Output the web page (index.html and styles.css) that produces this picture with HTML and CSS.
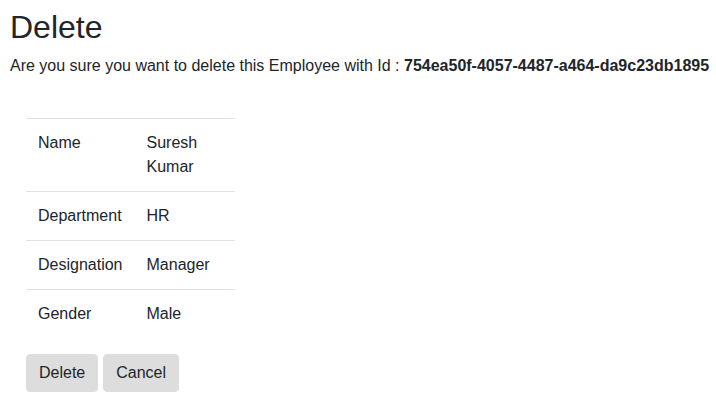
FILE: index.html
```html
<!DOCTYPE html>
<html lang="en">
<head>
    <meta charset="UTF-8">
    <title>Delete</title>
    <link rel="stylesheet" href="styles.css">
</head>
<body>
    <div class="container">
        <h2>Delete</h2>
        <p>Are you sure you want to delete this Employee with Id : <strong>754ea50f-4057-4487-a464-da9c23db1895</strong></p>

        <div class="details">
            <table class="table">
                <tr>
                    <td>Name</td>
                    <td>Suresh Kumar</td>
                </tr>
                <tr>
                    <td>Department</td>
                    <td>HR</td>
                </tr>
                <tr>
                    <td>Designation</td>
                    <td>Manager</td>
                </tr>
                <tr>
                    <td>Gender</td>
                    <td>Male</td>
                </tr>
            </table>

            <div class="actions">
                <button class="btn">Delete</button>
                <button class="btn">Cancel</button>
            </div>
        </div>
    </div>
</body>
</html>
```

FILE: styles.css
```css
* {
    box-sizing: border-box;
}

body {
    margin: 0;
    font-family: "Liberation Sans", Arial, sans-serif;
    font-size: 16px;
    line-height: 1.5;
    color: #212529;
    background: #fff;
}

.container {
    padding: 8px 0 8px 10px;
}

h2 {
    margin: 0 0 8px;
    font-size: 32px;
    font-weight: 400;
    line-height: 1.2;
}

p {
    margin: 0 0 16px;
    white-space: nowrap;
}

.details {
    margin: 40px 0 0 16px;
}

.table {
    width: 209px;
    border-collapse: collapse;
    margin-bottom: 16px;
}

.table td {
    padding: 12px;
    vertical-align: top;
    border-top: 1px solid #dee2e6;
}

.actions {
    display: flex;
    gap: 5px;
}

.btn {
    font-family: inherit;
    font-size: 16px;
    line-height: 1.5;
    color: #212529;
    background: #ddd;
    border: 1px solid #ddd;
    border-radius: 4px;
    padding: 6px 12px;
    cursor: pointer;
}
```
